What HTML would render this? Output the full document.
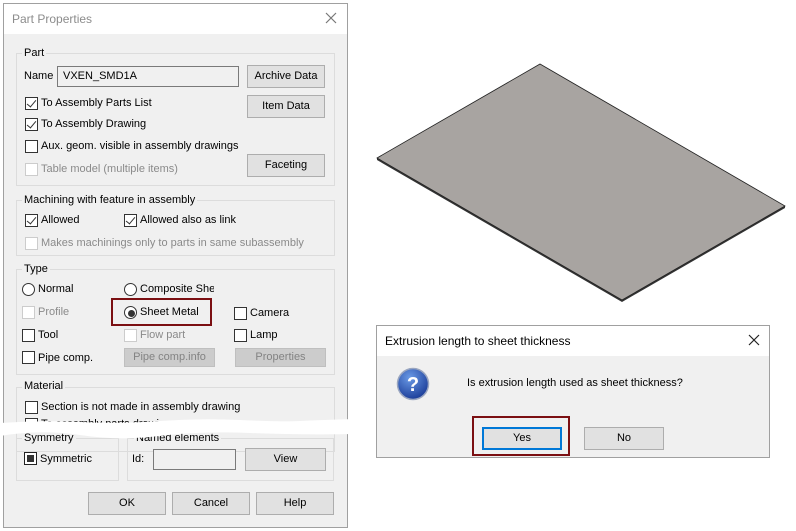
<!DOCTYPE html>
<html><head><meta charset="utf-8"><style>
*{margin:0;padding:0;box-sizing:border-box}
body{width:796px;height:531px;background:#fff;position:relative;overflow:hidden;font-family:"Liberation Sans",sans-serif;font-size:11px;color:#000}
.a{position:absolute}
.t{position:absolute;line-height:14px;white-space:nowrap}
.g{position:absolute;border:1px solid #dcdcdc}
.gl{position:absolute;background:#f0f0f0;padding:0 2px;line-height:14px;white-space:nowrap}
.cb{position:absolute;width:13px;height:13px;border:1px solid #333;background:#fff}
.cb.d{border-color:#ccc}
.cb.c::after{content:"";position:absolute;left:3px;top:0px;width:4px;height:8px;border:solid #333;border-width:0 1.5px 1.5px 0;transform:rotate(40deg)}
.rd{position:absolute;width:13px;height:13px;border:1px solid #333;border-radius:50%;background:#fff}
.b{position:absolute;background:#e1e1e1;border:1px solid #adadad;text-align:center;line-height:20px}
.b.d{background:#ccc;border-color:#bfbfbf;color:#838383}
.dis{color:#8a8a8a}
</style></head><body>
<div class="a" style="left:3px;top:3px;width:345px;height:525px;border:1px solid #a0a0a0;background:#f0f0f0"></div>
<div class="a" style="left:4px;top:4px;width:343px;height:30px;background:#fff"></div>
<div class="t" style="left:12px;top:12px;font-size:12px;color:#8c8c8c">Part Properties</div>
<svg class="a" style="left:325px;top:12px" width="12" height="12"><path d="M1 1L11 11M11 1L1 11" stroke="#777" stroke-width="1.2"/></svg>

<div class="g" style="left:16px;top:53px;width:319px;height:133px"></div>
<div class="gl" style="left:22px;top:46px">Part</div>
<div class="t" style="left:24px;top:69px">Name</div>
<div class="a" style="left:57px;top:66px;width:182px;height:21px;border:1px solid #7a7a7a;background:#f0f0f0"></div>
<div class="t" style="left:63px;top:69px">VXEN_SMD1A</div>
<div class="b" style="left:247px;top:65px;width:78px;height:23px">Archive Data</div>
<div class="b" style="left:247px;top:95px;width:78px;height:23px">Item Data</div>
<div class="b" style="left:247px;top:154px;width:78px;height:23px">Faceting</div>
<div class="cb c" style="left:25px;top:97px"></div><div class="t" style="left:41px;top:96px">To Assembly Parts List</div>
<div class="cb c" style="left:25px;top:118px"></div><div class="t" style="left:41px;top:117px">To Assembly Drawing</div>
<div class="cb" style="left:25px;top:140px"></div><div class="t" style="left:41px;top:139px">Aux. geom. visible in assembly drawings</div>
<div class="cb d" style="left:25px;top:163px"></div><div class="t dis" style="left:41px;top:162px">Table model (multiple items)</div>

<div class="g" style="left:16px;top:200px;width:319px;height:56px"></div>
<div class="gl" style="left:22px;top:193px">Machining with feature in assembly</div>
<div class="cb c" style="left:25px;top:214px"></div><div class="t" style="left:41px;top:213px">Allowed</div>
<div class="cb c" style="left:124px;top:214px"></div><div class="t" style="left:140px;top:213px">Allowed also as link</div>
<div class="cb d" style="left:25px;top:237px"></div><div class="t dis" style="left:41px;top:236px">Makes machinings only to parts in same subassembly</div>

<div class="g" style="left:16px;top:269px;width:319px;height:106px"></div>
<div class="gl" style="left:22px;top:262px">Type</div>
<div class="rd" style="left:22px;top:283px"></div><div class="t" style="left:38px;top:282px">Normal</div>
<div class="rd" style="left:124px;top:283px"></div><div class="t" style="left:140px;top:282px;width:74px;overflow:hidden">Composite Sheet</div>
<div class="cb d" style="left:22px;top:306px"></div><div class="t dis" style="left:38px;top:305px">Profile</div>
<div class="rd" style="left:124px;top:306px"></div><div class="a" style="left:128px;top:310px;width:7px;height:7px;border-radius:50%;background:#333"></div><div class="t" style="left:140px;top:305px">Sheet Metal</div>
<div class="a" style="left:111px;top:298px;width:101px;height:28px;border:2px solid #7b0f12"></div>
<div class="cb" style="left:234px;top:307px"></div><div class="t" style="left:250px;top:306px">Camera</div>
<div class="cb" style="left:22px;top:329px"></div><div class="t" style="left:38px;top:328px">Tool</div>
<div class="cb d" style="left:124px;top:329px"></div><div class="t dis" style="left:140px;top:328px">Flow part</div>
<div class="cb" style="left:234px;top:329px"></div><div class="t" style="left:250px;top:328px">Lamp</div>
<div class="cb" style="left:22px;top:351px"></div><div class="t" style="left:38px;top:351px">Pipe comp.</div>
<div class="b d" style="left:124px;top:348px;width:91px;height:19px;line-height:17px">Pipe comp.info</div>
<div class="b d" style="left:235px;top:348px;width:91px;height:19px;line-height:17px">Properties</div>

<div class="g" style="left:16px;top:387px;width:319px;height:65px"></div>
<div class="gl" style="left:22px;top:379px">Material</div>
<div class="cb" style="left:25px;top:401px"></div><div class="t" style="left:41px;top:400px">Section is not made in assembly drawing</div>
<div class="cb" style="left:25px;top:418px"></div><div class="t" style="left:41px;top:417px">To assembly parts drawing</div>

<div class="g" style="left:16px;top:438px;width:103px;height:43px"></div>
<div class="gl" style="left:22px;top:431px">Symmetry</div>
<div class="g" style="left:127px;top:438px;width:207px;height:43px"></div>
<div class="gl" style="left:134px;top:431px">Named elements</div>
<div class="cb" style="left:24px;top:452px;border-color:#222"></div><div class="a" style="left:27px;top:455px;width:7px;height:7px;background:#333"></div>
<div class="t" style="left:40px;top:452px">Symmetric</div>
<div class="t" style="left:132px;top:452px">Id:</div>
<div class="a" style="left:153px;top:449px;width:83px;height:21px;border:1px solid #7a7a7a;background:#f0f0f0"></div>
<div class="b" style="left:245px;top:448px;width:81px;height:23px">View</div>
<div class="b" style="left:88px;top:492px;width:78px;height:23px">OK</div>
<div class="b" style="left:172px;top:492px;width:78px;height:23px">Cancel</div>
<div class="b" style="left:256px;top:492px;width:78px;height:23px">Help</div>

<svg class="a" style="left:0;top:415px" width="360" height="28"><path d="M0 8 Q40 5 80 7 T160 6 T240 5 T300 6 T356 4 L356 19 Q300 20 250 18 T160 21 T80 20 T0 21 Z" fill="#fff"/></svg>

<svg class="a" style="left:370px;top:55px" width="420" height="255">
<polygon points="7,103 252,245 415,151 415,153 252,247 7,105" fill="#333"/>
<polygon points="7,103 170,9 415,151 252,245" fill="#a8a4a1" stroke="#222" stroke-width="0.8"/>
</svg>

<div class="a" style="left:376px;top:325px;width:394px;height:133px;border:1px solid #a0a0a0;background:#f0f0f0"></div>
<div class="a" style="left:377px;top:326px;width:392px;height:30px;background:#fff"></div>
<div class="t" style="left:385px;top:334px;font-size:12px">Extrusion length to sheet thickness</div>
<svg class="a" style="left:748px;top:334px" width="12" height="12"><path d="M1 1L11 11M11 1L1 11" stroke="#222" stroke-width="1.2"/></svg>
<svg class="a" style="left:396px;top:367px" width="34" height="34"><defs><radialGradient id="q" cx="40%" cy="30%" r="70%"><stop offset="0" stop-color="#6a9ae6"/><stop offset="1" stop-color="#1d3f9a"/></radialGradient></defs><circle cx="17" cy="17" r="15.5" fill="url(#q)" stroke="#9aa6c0" stroke-width="1.5"/><text x="17" y="24" text-anchor="middle" font-family="Liberation Sans" font-weight="bold" font-size="20" fill="#fff">?</text></svg>
<div class="t" style="left:467px;top:376px">Is extrusion length used as sheet thickness?</div>
<div class="a" style="left:472px;top:416px;width:98px;height:40px;border:2px solid #7b0f12"></div>
<div class="b" style="left:482px;top:427px;width:80px;height:23px;border:2px solid #0078d7;line-height:19px">Yes</div>
<div class="b" style="left:584px;top:427px;width:80px;height:23px">No</div>
</body></html>
